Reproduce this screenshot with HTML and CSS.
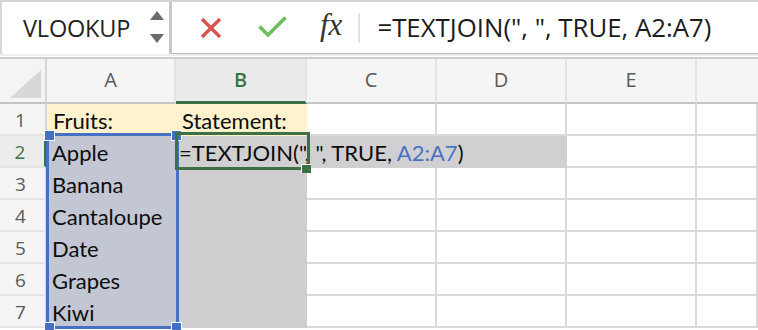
FILE: index.html
```html
<!DOCTYPE html>
<html lang="en">
<head>
  <meta charset="UTF-8">
  <meta name="viewport" content="width=device-width, initial-scale=1.0">
  <title>TEXTJOIN</title>
  <link rel="stylesheet" href="styles.css">
</head>
<body>
  <div class="toolbar">
    <div class="namebox">
      <span class="name">VLOOKUP</span>
      <div class="spin">
        <svg width="14" height="34" viewBox="0 0 14 34">
          <polygon points="7,0 14,9 0,9" fill="#6b6b6b"/>
          <polygon points="0,23 14,23 7,32" fill="#6b6b6b"/>
        </svg>
      </div>
    </div>
    <div class="actions">
      <svg class="cancel" width="22" height="22" viewBox="0 0 22 22">
        <path d="M2 2 L20 20 M20 2 L2 20" stroke="#d9534f" stroke-width="3.4" fill="none"/>
      </svg>
      <svg class="enter" width="30" height="24" viewBox="0 0 30 24">
        <path d="M1.5 11.5 L10 20 L27.5 2.5" stroke="#6fbd5c" stroke-width="3.6" fill="none"/>
      </svg>
      <span class="fx">fx</span>
      <span class="sep"></span>
    </div>
    <div class="formula">=TEXTJOIN(", ", TRUE, A2:A7)</div>
  </div>
  <div class="rule"></div>

  <div class="sheet">
    <div class="grid">
      <div class="corner"><span class="tri"></span></div>
      <div class="colhead">A</div>
      <div class="colhead active">B</div>
      <div class="colhead">C</div>
      <div class="colhead">D</div>
      <div class="colhead">E</div>
      <div class="colhead last"></div>

      <div class="rowhead">1</div>
      <div class="cell yellow">Fruits:</div>
      <div class="cell yellow">Statement:</div>
      <div class="cell"></div>
      <div class="cell"></div>
      <div class="cell"></div>
      <div class="cell"></div>

      <div class="rowhead active">2</div>
      <div class="cell range">Apple</div>
      <div class="cell editing">=TEXTJOIN(", ", TRUE, <span class="ref">A2:A7</span>)</div>
      <div class="cell"></div>
      <div class="cell"></div>

      <div class="rowhead">3</div>
      <div class="cell range">Banana</div>
      <div class="cell shade"></div>
      <div class="cell"></div>
      <div class="cell"></div>
      <div class="cell"></div>
      <div class="cell"></div>

      <div class="rowhead">4</div>
      <div class="cell range">Cantaloupe</div>
      <div class="cell shade"></div>
      <div class="cell"></div>
      <div class="cell"></div>
      <div class="cell"></div>
      <div class="cell"></div>

      <div class="rowhead">5</div>
      <div class="cell range">Date</div>
      <div class="cell shade"></div>
      <div class="cell"></div>
      <div class="cell"></div>
      <div class="cell"></div>
      <div class="cell"></div>

      <div class="rowhead">6</div>
      <div class="cell range">Grapes</div>
      <div class="cell shade"></div>
      <div class="cell"></div>
      <div class="cell"></div>
      <div class="cell"></div>
      <div class="cell"></div>

      <div class="rowhead">7</div>
      <div class="cell range">Kiwi</div>
      <div class="cell shade"></div>
      <div class="cell"></div>
      <div class="cell"></div>
      <div class="cell"></div>
      <div class="cell"></div>
    </div>

    <div class="refbox">
      <span class="handle tl"></span>
      <span class="handle tr"></span>
      <span class="handle bl"></span>
      <span class="handle br"></span>
    </div>
    <div class="editbox">
      <span class="fill"></span>
    </div>
  </div>
</body>
</html>
```

FILE: styles.css
```css
* {
  margin: 0;
  padding: 0;
  box-sizing: border-box;
}
body {
  width: 758px;
  height: 330px;
  overflow: hidden;
  background: #fff;
  font-family: 'Open Sans', sans-serif;
}
.toolbar {
  height: 54px;
  display: flex;
  align-items: center;
  border-top: 2px solid #d4d4d4;
  border-bottom: 1px solid #b9b9b9;
  background: #fff;
}
.namebox {
  width: 172px;
  height: 52px;
  display: flex;
  align-items: center;
  padding-left: 21px;
  border-left: 2px solid #d8d8d8;
  border-right: 3px solid #c8c8c8;
  background: #fff;
}
.name {
  font-size: 23.5px;
  color: #222;
  letter-spacing: -0.2px;
}
.spin {
  margin-left: 20px;
  height: 34px;
}
.actions {
  display: flex;
  align-items: center;
  height: 100%;
}
.cancel {
  margin-left: 28px;
}
.enter {
  margin-left: 36px;
  margin-top: -1px;
}
.fx {
  margin-left: 32px;
  font-family: 'Liberation Serif', serif;
  font-style: italic;
  font-size: 31px;
  color: #333;
  margin-top: -6px;
}
.sep {
  width: 2px;
  height: 30px;
  background: #e2e2e2;
  margin-left: 16px;
}
.formula {
  margin-left: 17px;
  font-size: 25.8px;
  color: #1c1c1c;
  white-space: nowrap;
  margin-top: -1px;
}
.rule {
  height: 5px;
  border-top: 2px solid #eeeeee;
  border-bottom: 2px solid #cdcdcd;
}

.sheet {
  position: relative;
}
.grid {
  display: grid;
  grid-template-columns: 47px 129px 131px 130px 130px 130px 61px;
  grid-template-rows: 45px repeat(7, 32px);
}
.corner {
  position: relative;
  background: #f4f4f4;
  border-right: 2px solid #d6d6d6;
  border-bottom: 2px solid #c4c4c4;
}
.tri {
  position: absolute;
  right: 4px;
  bottom: 4px;
  width: 0;
  height: 0;
  border-left: 31px solid transparent;
  border-bottom: 28px solid #d7d7d7;
}
.colhead {
  background: #f5f5f5;
  border-right: 2px solid #e3e3e3;
  border-bottom: 2px solid #c4c4c4;
  color: #5a5a5a;
  font-size: 20px;
  text-align: center;
  line-height: 42px;
}
.colhead.active {
  background: #ebebeb;
  color: #3c7446;
  border-bottom: 3px solid #3d7045;
  font-weight: 600;
}
.colhead.last {
  border-right: none;
}
.rowhead {
  background: #f5f5f5;
  border-right: 2px solid #d6d6d6;
  border-bottom: 2px solid #e4e4e4;
  color: #5a5a5a;
  font-size: 19px;
  text-align: center;
  line-height: 30px;
  padding-top: 1px;
  padding-right: 4px;
}
.rowhead.active {
  color: #3c7446;
  border-right: 3px solid #3d7045;
  background: #ececec;
}
.cell {
  border-right: 2px solid #dadada;
  border-bottom: 2px solid #dadada;
  font-family: 'Lato', sans-serif;
  font-size: 22px;
  color: #0d0d0d;
  padding-left: 5px;
  line-height: 30px;
  padding-top: 2px;
  white-space: nowrap;
}
.yellow {
  background: #fff2cc;
  border-color: #fff2cc;
  padding-left: 6px;
}
.range {
  background: #c3c7d3;
  border-color: #c3c7d3;
}
.shade {
  background: #d0cdd0;
  border-color: #d0cdd0;
}
.editing {
  grid-column: span 3;
  background: #d0cfd1;
  border-color: #d0cfd1;
  padding-left: 3px;
}
.ref {
  color: #4a72c2;
}

.refbox {
  position: absolute;
  left: 46px;
  top: 74px;
  width: 133px;
  height: 196px;
  border: 3px solid #4670c4;
}
.handle {
  position: absolute;
  width: 11px;
  height: 11px;
  background: #4670c4;
  border: 1.5px solid #fff;
}
.handle.tl { left: -5px; top: -6px; }
.handle.tr { right: -6px; top: -6px; }
.handle.bl { left: -5px; bottom: -7px; }
.handle.br { right: -6px; bottom: -7px; }

.editbox {
  position: absolute;
  left: 175px;
  top: 73px;
  width: 135px;
  height: 38px;
  border: 3px solid #3d7045;
}
.fill {
  position: absolute;
  right: -4px;
  bottom: -6px;
  width: 10px;
  height: 9px;
  background: #3d7045;
  border-left: 1.5px solid #fff;
  border-top: 1.5px solid #fff;
}
```
